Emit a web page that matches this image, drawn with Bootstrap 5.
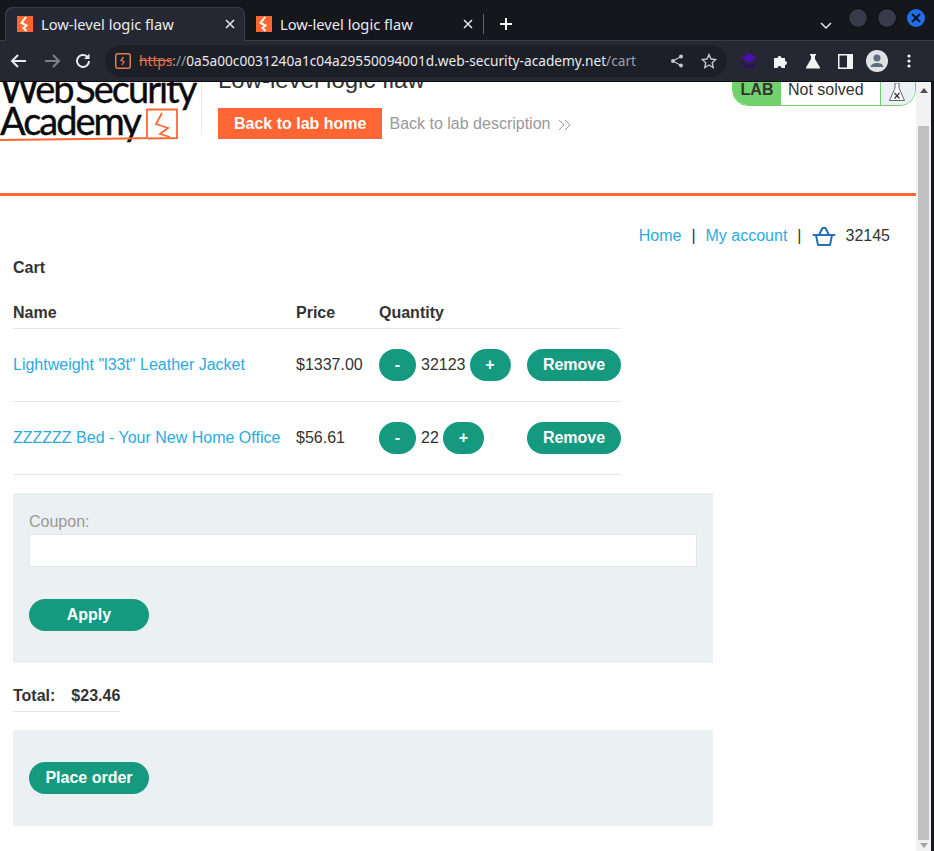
<!DOCTYPE html>
<html lang="en">
<head>
    <meta charset="UTF-8">
    <meta name="viewport" content="width=device-width, initial-scale=1.0">
    <title>Low-level logic flaw</title>
    <link href="https://cdn.jsdelivr.net/npm/bootstrap@5.3.0/dist/css/bootstrap.min.css" rel="stylesheet">
    <style>
        html, body { height: 851px; overflow: hidden; }
        body { font-family: "Liberation Sans", Arial, sans-serif; font-size: 16px; color: #333332; background: #fff; }
        a { text-decoration: none; }

        /* browser chrome */
        .tab-strip { height: 40px; background: #16171d; padding-top: 7px; }
        .tab-item { width: 240px; height: 34px; padding: 0 10px 0 11px; color: #e8eaed; font-family: "Noto Sans", sans-serif; font-size: 14.7px; position: relative; }
        .tab-item.is-active { background: #252833; border-radius: 8px 8px 0 0; margin-left: 5px; box-shadow: inset 1px 1px 0 #3a3d47, inset -1px 0 0 #3a3d47; padding-left: 12px; }
        .tab-item.is-second { width: 238px; }
        .tab-item .tab-x { margin-left: auto; }
        .tab-name { margin-left: 8px; }
        .tab-divider { width: 1px; height: 20px; background: #5f6368; margin-top: 7px; }
        .tab-plus { margin: 10px 0 0 15px; }
        .tab-more { margin: 15px 0 0 auto; }
        .win-dots { gap: 11px; margin: 2px 9px 0 17px; }
        .win-dot { width: 18px; height: 18px; border-radius: 50%; background: #353b48; box-shadow: 0 0 0 1px #0c0d10; }
        .win-dot.is-close { background: #1f6feb; box-shadow: none; }
        .tool-bar { height: 42px; background: #252833; border-top: 1px solid #3a3d47; border-bottom: 1px solid #0b0c10; padding-left: 3px; }
        .tool-btn { width: 32px; height: 32px; }
        .tool-btn.is-forward { margin-left: 1px; }
        .tool-btn.is-reload { margin-left: -1px; }
        .url-pill { width: 622px; height: 32px; margin: 0 6px 0 6px; background: #1d1f28; border-radius: 16px; padding: 0 10px 0 10px; font-size: 13.7px; font-family: "Noto Sans", sans-serif; color: #e8eaed; white-space: nowrap; }
        .url-scheme { color: #e8704f; text-decoration: line-through; }
        .url-dim { color: #9aa0a6; }

        /* page */
        .view-area { height: 769px; }
        .page-area { width: 916px; }
        .scroll-track { width: 15px; background: #f1f1f1; position: relative; }
        .scroll-up { width: 0; height: 0; border: 4px solid transparent; border-bottom: 5px solid #505050; border-top: 0; position: absolute; top: 6px; left: 4px; }
        .scroll-down { width: 0; height: 0; border: 4px solid transparent; border-top: 5px solid #a3a3a3; border-bottom: 0; position: absolute; bottom: 3px; left: 4px; }
        .scroll-thumb { position: absolute; top: 44px; bottom: 11px; left: 2px; right: 2px; background: #c1c1c1; }
        .win-edge { width: 3px; background: #16171d; }

        .lab-head { height: 114px; border-bottom: 3px solid #ff6633; position: relative; overflow: hidden; }
        .logo-box { width: 202px; height: 53px; border-right: 1px solid #e6e8ea; color: #0b0b0b; font-family: "Lato", sans-serif; position: relative; flex: none; }
        .logo-line { font-size: 38px; line-height: 32px; letter-spacing: -2px; word-spacing: -5px; white-space: nowrap; -webkit-text-stroke: .4px #0b0b0b; }
        .logo-line:first-child { margin-top: -10px; }
        .logo-mark { position: absolute; left: 0; top: 24px; }
        .head-main { padding-left: 16px; }
        .lab-title { font-size: 24px; line-height: 28px; margin: -16px 0 0; color: #333332; font-weight: 400; }
        .btn-lab-home { background: #ff6633; color: #fff; font-weight: 700; font-size: 16px; padding: 0 16px; height: 31px; line-height: 31px; margin-top: 14px; }
        .lab-desc { color: #999; margin: 14px 0 0 7px; line-height: 31px; }
        .desc-arrows { margin-left: 3px; }
        .lab-status { position: absolute; top: -9px; right: 0; width: 184px; height: 33px; border: 1px solid #70d16d; border-radius: 0 0 16px 16px; overflow: hidden; }
        .lab-tag { width: 48px; background: #70d16d; font-weight: 700; }
        .lab-state { width: 99px; padding-left: 7px; }
        .lab-flask { flex: 1; background: #ebf0f2; border-left: 1px solid #70d16d; padding: 0 3px 4px 0; }

        .top-links { padding: 28px 26px 0 0; height: 60px; }
        .link-blue { color: #29abe2; }
        .link-sep { margin: 0 10px; }
        .cart-title { font-weight: 700; margin: 0 0 0 13px; line-height: 24px; height: 45px; }
        .cart-grid { width: 608px; margin: 0 0 18px 13px; border-collapse: collapse; }
        .cart-grid th { font-weight: 700; height: 27px; padding: 0; border-bottom: 1px solid #e6e6e6; vertical-align: top; line-height: 24px; }
        .cart-grid td { height: 73px; padding: 0; border-bottom: 1px solid #e6e6e6; }
        .col-name { width: 283px; }
        .col-price { width: 83px; }
        .btn-green { background: #159a80; color: #fff; font-weight: 700; font-size: 16px; height: 32px; border: 0; border-radius: 16px; padding: 0; }
        .btn-minus { width: 37px; }
        .btn-plus { width: 41px; }
        .btn-remove { width: 94px; }
        .btn-wide { width: 120px; }
        .qty-num { margin: 0 4px 0 5px; }
        .grey-panel { width: 700px; margin-left: 13px; background: #ebf0f2; padding: 16px; }
        .grey-panel.is-order { padding-top: 32px; padding-bottom: 32px; }
        .coupon-label { color: #999; height: 25px; line-height: 26px; }
        .coupon-input { height: 33px; border: 1px solid #e6e6e6; background: #fff; margin-bottom: 32px; }
        .total-box { width: 107px; margin: 21px 0 18px 13px; border-bottom: 1px solid #e6e6e6; font-weight: 700; height: 28px; line-height: 24px; }
        .total-gap { margin-left: 16px; }
        .basket-ico { margin-top: 2px; }
        .basket-count { margin-left: 10px; }
    </style>
</head>
<body>
    <!-- browser chrome -->
    <div class="tab-strip d-flex align-items-start">
        <div class="tab-item is-active d-flex align-items-center">
            <svg width="16" height="16" viewBox="0 0 16 16"><rect width="16" height="16" fill="#ff6633"/><path d="M9 1 4.500 7l5 2.500-3 2.500 3 3" fill="none" stroke="#fff" stroke-width="2"/></svg>
            <span class="tab-name">Low-level logic flaw</span>
            <svg class="tab-x" width="10" height="10" viewBox="0 0 10 10"><path d="M1 1l8 8M9 1l-8 8" stroke="#e8eaed" stroke-width="1.500"/></svg>
        </div>
        <div class="tab-item is-second d-flex align-items-center">
            <svg width="16" height="16" viewBox="0 0 16 16"><rect width="16" height="16" fill="#ff6633"/><path d="M9 1 4.500 7l5 2.500-3 2.500 3 3" fill="none" stroke="#fff" stroke-width="2"/></svg>
            <span class="tab-name">Low-level logic flaw</span>
            <svg class="tab-x" width="10" height="10" viewBox="0 0 10 10"><path d="M1 1l8 8M9 1l-8 8" stroke="#e8eaed" stroke-width="1.500"/></svg>
        </div>
        <div class="tab-divider"></div>
        <svg class="tab-plus" width="14" height="14" viewBox="0 0 14 14"><path d="M7 1v12M1 7h12" stroke="#fff" stroke-width="2"/></svg>
        <svg class="tab-more" width="12" height="8" viewBox="0 0 12 8"><path d="M1 1l5 5 5-5" fill="none" stroke="#e8eaed" stroke-width="1.500"/></svg>
        <div class="win-dots d-flex">
            <div class="win-dot"></div>
            <div class="win-dot"></div>
            <div class="win-dot is-close d-flex align-items-center justify-content-center"><svg width="10" height="10" viewBox="0 0 10 10"><path d="M1 1l8 8M9 1l-8 8" stroke="#0b1020" stroke-width="2"/></svg></div>
        </div>
    </div>
    <div class="tool-bar d-flex align-items-center">
        <div class="tool-btn d-flex align-items-center justify-content-center"><svg width="20" height="20" viewBox="0 0 20 20"><path d="M17 10H4M9 4l-6 6 6 6" fill="none" stroke="#e8eaed" stroke-width="2"/></svg></div>
        <div class="tool-btn is-forward d-flex align-items-center justify-content-center"><svg width="20" height="20" viewBox="0 0 20 20"><path d="M3 10h13M11 4l6 6-6 6" fill="none" stroke="#7d7f85" stroke-width="2"/></svg></div>
        <div class="tool-btn is-reload d-flex align-items-center justify-content-center"><svg width="20" height="20" viewBox="0 0 20 20"><path d="M16 10a6 6 0 1 1-2-4.500" fill="none" stroke="#e8eaed" stroke-width="2"/><path d="M16.500 2.500v5.500h-5.500z" fill="#e8eaed"/></svg></div>
        <div class="url-pill d-flex align-items-center">
            <svg width="16" height="16" viewBox="0 0 16 16" class="me-2"><rect x=".75" y=".75" width="14.500" height="14.500" rx="2" fill="none" stroke="#e07a50" stroke-width="1.500"/><path d="M8.500 4 6 7.500l3 1L7 12" fill="none" stroke="#e07a50" stroke-width="1.300"/></svg>
            <span><span class="url-scheme">https</span><span class="url-dim">://</span>0a5a00c0031240a1c04a29550094001d.web-security-academy.net<span class="url-dim">/cart</span></span>
            <svg class="ms-auto" width="14" height="14" viewBox="0 0 14 14"><circle cx="11" cy="2.500" r="2" fill="#c4c7c9"/><circle cx="11" cy="11.500" r="2" fill="#c4c7c9"/><circle cx="3" cy="7" r="2" fill="#c4c7c9"/><path d="M11 2.500 3 7l8 4.500" fill="none" stroke="#c4c7c9" stroke-width="1.200"/></svg>
            <svg width="16" height="16" viewBox="0 0 16 16" style="margin-left:17px"><path d="M8 1.500l2 4.500 4.800.5-3.600 3.200 1 4.800L8 12l-4.200 2.500 1-4.800L1.200 6.500 6 6z" fill="none" stroke="#c4c7c9" stroke-width="1.400"/></svg>
        </div>
        <div class="tool-btn d-flex align-items-center justify-content-center"><svg width="16" height="18" viewBox="0 0 16 18"><path d="M8 1l8 5-8 5-8-5z" fill="#4b0fb0"/><path d="M0 9.500l8 5 8-5v2.500l-8 5-8-5z" fill="#2c0d6e"/></svg></div>
        <div class="tool-btn d-flex align-items-center justify-content-center"><svg width="16" height="16" viewBox="0 0 16 16"><path d="M1 5h3.500a2 2 0 1 1 4 0H12v3a2 2 0 1 1 0 4v3H8.500a2 2 0 1 0-4 0H1z" fill="#f1f3f4"/></svg></div>
        <div class="tool-btn d-flex align-items-center justify-content-center"><svg width="16" height="16" viewBox="0 0 16 16"><path d="M5 1h6v1.500h-1v3.500l5 8.500v1H1v-1l5-8.500V2.500H5z" fill="#f1f3f4"/></svg></div>
        <div class="tool-btn d-flex align-items-center justify-content-center"><svg width="15" height="15" viewBox="0 0 15 15"><path d="M.75.750h13.500v13.500H.75z" fill="#252833" stroke="#f1f3f4" stroke-width="1.500"/><rect x="9" y="0" width="6" height="15" fill="#f1f3f4"/></svg></div>
        <div class="tool-btn d-flex align-items-center justify-content-center"><svg width="22" height="22" viewBox="0 0 22 22"><circle cx="11" cy="11" r="11" fill="#dfe1e5"/><circle cx="11" cy="8" r="3.500" fill="#5f6b7f"/><path d="M4.500 17c1-3.500 4-4 6.500-4s5.500.5 6.500 4z" fill="#5f6b7f"/></svg></div>
        <div class="tool-btn d-flex align-items-center justify-content-center"><svg width="4" height="14" viewBox="0 0 4 14"><circle cx="2" cy="2" r="1.600" fill="#f1f3f4"/><circle cx="2" cy="7" r="1.600" fill="#f1f3f4"/><circle cx="2" cy="12" r="1.600" fill="#f1f3f4"/></svg></div>
    </div>

    <div class="view-area d-flex">
        <div class="page-area">
            <!-- lab banner, scrolled a little under the toolbar -->
            <div class="lab-head d-flex align-items-start">
                <div class="logo-box">
                    <div class="logo-line">Web Security</div>
                    <div class="logo-line">Academy</div>
                    <svg class="logo-mark" width="180" height="36" viewBox="0 0 180 36"><path d="M0 34l127-1.500 20-.5V3.500h30V32l-29 .5" fill="none" stroke="#ff6633" stroke-width="1.800"/><path d="M162 7l-6 11 12 4-8 6 10 3" fill="none" stroke="#ff6633" stroke-width="1.800"/></svg>
                </div>
                <div class="head-main">
                    <h2 class="lab-title">Low-level logic flaw</h2>
                    <div class="d-flex">
                        <a class="btn-lab-home" href="#">Back to lab home</a>
                        <a class="lab-desc" href="#">Back to lab description
                            <svg class="desc-arrows" width="14" height="12" viewBox="0 0 14 12"><path d="M1 1l5 5-5 5M7 1l5 5-5 5" fill="none" stroke="#999" stroke-width="1"/></svg>
                        </a>
                    </div>
                </div>
                <div class="lab-status d-flex">
                    <div class="lab-tag d-flex align-items-center justify-content-center">LAB</div>
                    <div class="lab-state d-flex align-items-center">Not solved</div>
                    <div class="lab-flask d-flex align-items-end justify-content-center">
                        <svg width="16" height="18" viewBox="0 0 16 18"><path d="M6 0v5L.5 17.500h15L10 5V0z" fill="#fff" stroke="#666" stroke-width="1"/><path d="M5.500 10l5 5.500M10.500 10l-5 5.500" stroke="#333" stroke-width="1.200"/></svg>
                    </div>
                </div>
            </div>

            <div class="top-links d-flex justify-content-end align-items-start">
                <a class="link-blue" href="#">Home</a><span class="link-sep">|</span>
                <a class="link-blue" href="#">My account</a><span class="link-sep">|</span>
                <svg class="basket-ico" width="24" height="20" viewBox="0 0 24 20"><path d="M1.500 9h21M4 9l2 10h12l2-10M7 9l3.500-7h3L17 9" fill="none" stroke="#2a6fb5" stroke-width="2" stroke-linejoin="round" stroke-linecap="round"/></svg>
                <span class="basket-count">32145</span>
            </div>

            <p class="cart-title">Cart</p>
            <table class="cart-grid">
                <tr>
                    <th class="col-name">Name</th>
                    <th class="col-price">Price</th>
                    <th colspan="2">Quantity</th>
                </tr>
                <tr>
                    <td><a class="link-blue" href="#">Lightweight "l33t" Leather Jacket</a></td>
                    <td>$1337.00</td>
                    <td><button class="btn-green btn-minus">-</button><span class="qty-num">32123</span><button class="btn-green btn-plus">+</button></td>
                    <td class="text-end"><button class="btn-green btn-remove">Remove</button></td>
                </tr>
                <tr>
                    <td><a class="link-blue" href="#">ZZZZZZ Bed - Your New Home Office</a></td>
                    <td>$56.61</td>
                    <td><button class="btn-green btn-minus">-</button><span class="qty-num">22</span><button class="btn-green btn-plus">+</button></td>
                    <td class="text-end"><button class="btn-green btn-remove">Remove</button></td>
                </tr>
            </table>

            <div class="grey-panel">
                <div class="coupon-label">Coupon:</div>
                <div class="coupon-input"></div>
                <button class="btn-green btn-wide d-block mb-3 mt-0">Apply</button>
            </div>

            <div class="total-box">Total:<span class="total-gap">$23.46</span></div>

            <div class="grey-panel is-order">
                <button class="btn-green btn-wide d-block">Place order</button>
            </div>
        </div>
        <div class="scroll-track">
            <div class="scroll-up"></div>
            <div class="scroll-thumb"></div>
            <div class="scroll-down"></div>
        </div>
        <div class="win-edge"></div>
    </div>

    <script src="https://cdn.jsdelivr.net/npm/bootstrap@5.3.0/dist/js/bootstrap.bundle.min.js"></script>
</body>
</html>
